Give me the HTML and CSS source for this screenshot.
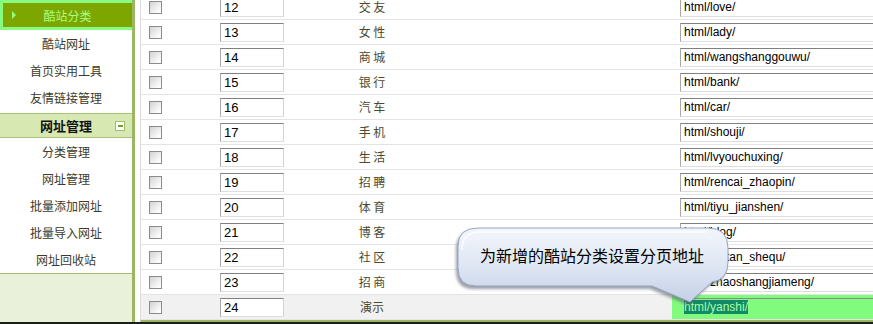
FILE: index.html
```html
<!DOCTYPE html>
<html>
<head>
  <title>酷站分类管理</title>
  <link rel="stylesheet" href="styles.css">
</head>
<body>
  <div class="frame">
    <aside class="sidebar">
      <div class="nav-current"><span class="arrow"></span><span>酷站分类</span><span></span></div>
      <a class="nav-item">酷站网址</a>
      <a class="nav-item">首页实用工具</a>
      <a class="nav-item">友情链接管理</a>

      <div class="nav-group">
        <span></span>
        <span class="group-title">网址管理</span>
        <span class="toggle"><i></i></span>
      </div>
      <a class="nav-item">分类管理</a>
      <a class="nav-item">网址管理</a>
      <a class="nav-item">批量添加网址</a>
      <a class="nav-item">批量导入网址</a>
      <a class="nav-item">网址回收站</a>
      <div class="sidebar-fill"></div>
    </aside>

    <main class="main">
      <table class="list">
        <tr>
          <td class="c-check"><input type="checkbox"></td>
          <td class="c-num"><input class="box num" value="12"></td>
          <td class="c-name">交 友</td>
          <td class="c-gap"></td>
          <td class="c-url"><input class="box url" value="html/love/"></td>
        </tr>
        <tr>
          <td class="c-check"><input type="checkbox"></td>
          <td class="c-num"><input class="box num" value="13"></td>
          <td class="c-name">女 性</td>
          <td class="c-gap"></td>
          <td class="c-url"><input class="box url" value="html/lady/"></td>
        </tr>
        <tr>
          <td class="c-check"><input type="checkbox"></td>
          <td class="c-num"><input class="box num" value="14"></td>
          <td class="c-name">商 城</td>
          <td class="c-gap"></td>
          <td class="c-url"><input class="box url" value="html/wangshanggouwu/"></td>
        </tr>
        <tr>
          <td class="c-check"><input type="checkbox"></td>
          <td class="c-num"><input class="box num" value="15"></td>
          <td class="c-name">银 行</td>
          <td class="c-gap"></td>
          <td class="c-url"><input class="box url" value="html/bank/"></td>
        </tr>
        <tr>
          <td class="c-check"><input type="checkbox"></td>
          <td class="c-num"><input class="box num" value="16"></td>
          <td class="c-name">汽 车</td>
          <td class="c-gap"></td>
          <td class="c-url"><input class="box url" value="html/car/"></td>
        </tr>
        <tr>
          <td class="c-check"><input type="checkbox"></td>
          <td class="c-num"><input class="box num" value="17"></td>
          <td class="c-name">手 机</td>
          <td class="c-gap"></td>
          <td class="c-url"><input class="box url" value="html/shouji/"></td>
        </tr>
        <tr>
          <td class="c-check"><input type="checkbox"></td>
          <td class="c-num"><input class="box num" value="18"></td>
          <td class="c-name">生 活</td>
          <td class="c-gap"></td>
          <td class="c-url"><input class="box url" value="html/lvyouchuxing/"></td>
        </tr>
        <tr>
          <td class="c-check"><input type="checkbox"></td>
          <td class="c-num"><input class="box num" value="19"></td>
          <td class="c-name">招 聘</td>
          <td class="c-gap"></td>
          <td class="c-url"><input class="box url" value="html/rencai_zhaopin/"></td>
        </tr>
        <tr>
          <td class="c-check"><input type="checkbox"></td>
          <td class="c-num"><input class="box num" value="20"></td>
          <td class="c-name">体 育</td>
          <td class="c-gap"></td>
          <td class="c-url"><input class="box url" value="html/tiyu_jianshen/"></td>
        </tr>
        <tr>
          <td class="c-check"><input type="checkbox"></td>
          <td class="c-num"><input class="box num" value="21"></td>
          <td class="c-name">博 客</td>
          <td class="c-gap"></td>
          <td class="c-url"><input class="box url" value="html/blog/"></td>
        </tr>
        <tr>
          <td class="c-check"><input type="checkbox"></td>
          <td class="c-num"><input class="box num" value="22"></td>
          <td class="c-name">社 区</td>
          <td class="c-gap"></td>
          <td class="c-url"><input class="box url" value="html/luntan_shequ/"></td>
        </tr>
        <tr>
          <td class="c-check"><input type="checkbox"></td>
          <td class="c-num"><input class="box num" value="23"></td>
          <td class="c-name">招 商</td>
          <td class="c-gap"></td>
          <td class="c-url"><input class="box url" value="html/zhaoshangjiameng/"></td>
        </tr>
        <tr class="row-new">
          <td class="c-check"><input type="checkbox"></td>
          <td class="c-num"><input class="box num" value="24"></td>
          <td class="c-name">演示</td>
          <td class="c-gap"></td>
          <td class="c-url"><div class="box url url-active"><span class="sel">html/yanshi/</span></div></td>
        </tr>
      </table>
    </main>
  </div>
  <div class="bottom-bar"></div>

  <!-- callout over the new row -->
  <div class="tip">
    <svg class="tip-shape" width="285" height="90" viewBox="452 222 285 90">
      <defs>
        <linearGradient id="tipFill" x1="0" y1="0" x2="0" y2="1">
          <stop offset="0" stop-color="#f3f6fb"/>
          <stop offset="0.5" stop-color="#dfe7f4"/>
          <stop offset="1" stop-color="#c4d0e6"/>
        </linearGradient>
        <filter id="tipBlur" x="-10%" y="-10%" width="120%" height="130%">
          <feGaussianBlur stdDeviation="1.4"/>
        </filter>
      </defs>
      <path transform="translate(-2 3)" filter="url(#tipBlur)" fill="#59606c" opacity="0.6"
            d="M478,228 H708 Q728,228 728,248 V262 Q728,280 712,282 L690,302 L652,286 H476 Q458,286 458,268 V246 Q458,228 478,228 Z"/>
      <path fill="url(#tipFill)" stroke="#95a5c2" stroke-width="1"
            d="M478,228 H708 Q728,228 728,248 V262 Q728,280 712,282 L690,302 L652,286 H476 Q458,286 458,268 V246 Q458,228 478,228 Z"/>
      <path fill="none" stroke="#ffffff" stroke-width="1.5" opacity="0.8"
            d="M462,250 Q462,232 480,232 H706"/>
    </svg>
    <span class="tip-text">为新增的酷站分类设置分页地址</span>
  </div>
</body>
</html>
```

FILE: styles.css
```css
body {
  margin: 0;
  height: 324px;
  overflow: hidden;
  background: #fff;
  font-family: "Liberation Sans", Arial, "Noto Sans CJK SC", sans-serif;
  font-size: 12px;
}
.frame {
  display: flex;
  height: 322px;
}
.bottom-bar {
  height: 2px;
  background: #1d1d1d;
}

/* left menu */
.sidebar {
  width: 132px;
  flex: none;
  display: flex;
  flex-direction: column;
  border-right: 3px solid #9db664;
  background: #fff;
  font-family: "Noto Sans CJK SC", sans-serif;
}
.nav-current {
  height: 24px;
  display: grid;
  grid-template-columns: 1fr auto 1fr;
  align-items: center;
  border: 3px solid #86fb7f;
  border-right: none;
  background: #7ea600;
  color: #a4ff84;
  font-size: 12px;
}
.arrow {
  justify-self: start;
  margin-left: 9px;
  width: 0;
  height: 0;
  border-top: 4px solid transparent;
  border-bottom: 4px solid transparent;
  border-left: 4px solid #8cff7e;
}
.nav-item {
  display: block;
  height: 27px;
  line-height: 27px;
  text-align: center;
  color: #3c3c2a;
  font-size: 12px;
  text-decoration: none;
}
.nav-group {
  margin-top: 2px;
  height: 23px;
  display: grid;
  grid-template-columns: 1fr auto 1fr;
  align-items: center;
  border-top: 1px solid #a9c172;
  border-bottom: 1px solid #a9c172;
  background: #d8e8b2;
}
.group-title {
  font-size: 13px;
  font-weight: bold;
  color: #111;
}
.toggle {
  justify-self: end;
  margin-right: 7px;
  width: 8px;
  height: 8px;
  border: 1px solid #a3bc6a;
  background: #fff;
  display: flex;
  align-items: center;
  justify-content: center;
}
.toggle i {
  display: block;
  width: 5px;
  height: 2px;
  background: #7c9e2c;
}
.sidebar-fill {
  flex: 1;
  border-top: 1px solid #a3bb6a;
  background: #e9f1da;
}

/* list */
.main {
  flex: 1;
  min-width: 0;
  margin-left: 5px;
  border-left: 1px solid #dcdcdc;
  border-bottom: 2px solid #9db664;
  overflow: hidden;
}
.list {
  margin-top: -5px;
  border-collapse: collapse;
  table-layout: fixed;
  width: 771px;
}
.list td {
  height: 24px;
  padding: 0;
  border-bottom: 1px solid #e4e4e4;
  vertical-align: middle;
}
.c-check {
  width: 51px;
  padding-left: 8px !important;
}
.c-check input {
  display: block;
  margin: 0;
  width: 13px;
  height: 13px;
  appearance: none;
  border: 1px solid #8b8b8b;
  background: linear-gradient(135deg, #d2d2d2, #f6f6f6 70%, #fff);
}
.c-num {
  width: 90px;
}
.c-name {
  width: 164px;
  text-align: center;
  color: #4a4a30;
  font-family: "Noto Sans CJK SC", sans-serif;
  font-size: 12px;
  line-height: 14px;
}
.c-gap {
  width: 218px;
}
.c-url {
  width: 240px;
  padding-left: 8px !important;
}
.box {
  display: block;
  box-sizing: border-box;
  height: 19px;
  margin: 0;
  padding: 0 3px;
  border: 1px solid;
  border-color: #808080 #d4d4d4 #dedede #a8a8a8;
  background: #fff;
  color: #000;
  font-family: "Liberation Sans", Arial, sans-serif;
  outline: none;
}
.num {
  width: 64px;
  margin-left: 20px;
  font-size: 13px;
}
.url {
  width: 230px;
  font-size: 12px;
}
.row-new td {
  background: #f1f1f1;
}
.row-new td.c-url {
  background: #80fb7e;
}
.url-active {
  background: transparent;
  border-color: #8a8a8a transparent transparent transparent;
  line-height: 17px;
}
.sel {
  background: #138a66;
  color: #a6ffa6;
}

/* callout */
.tip {
  position: absolute;
  left: 452px;
  top: 222px;
  width: 285px;
  height: 90px;
}
.tip-shape {
  position: absolute;
  left: 0;
  top: 0;
}
.tip-text {
  position: relative;
  display: block;
  padding: 22px 0 0 28px;
  line-height: 22px;
  font-family: "Noto Sans CJK SC", sans-serif;
  font-size: 16px;
  color: #000;
  white-space: nowrap;
}
```
